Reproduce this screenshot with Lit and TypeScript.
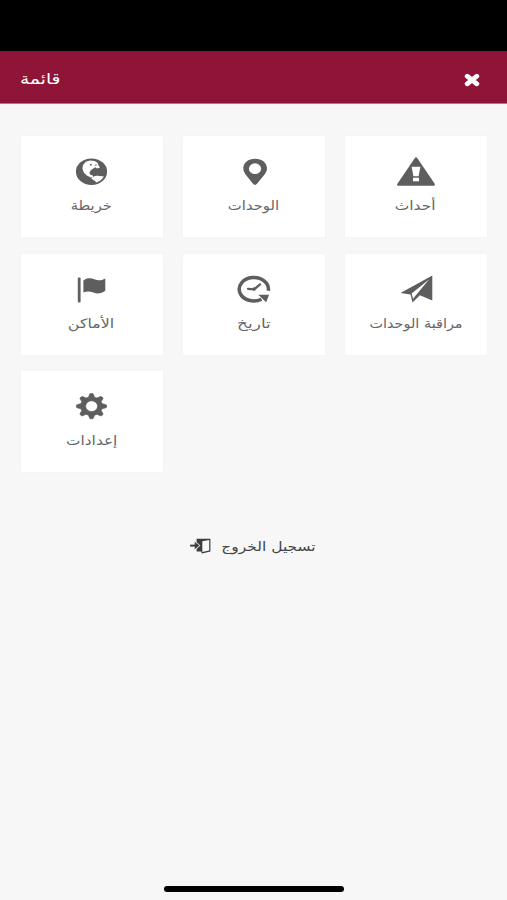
import { LitElement, html, svg, css } from "lit";
import { customElement } from "lit/decorators.js";

const gearPath = (() => {
  const pts: string[] = [];
  const n = 8;
  for (let i = 0; i < n; i++) {
    const a = (i * 2 * Math.PI) / n;
    for (const [d, r] of [[-0.27, 0.72], [-0.15, 0.9], [-0.09, 0.98], [0.09, 0.98], [0.15, 0.9], [0.27, 0.72]]) {
      const x = 23.5 + 15.4 * r * Math.cos(a + d);
      const y = 15.2 + 12.9 * r * Math.sin(a + d);
      pts.push(`${x.toFixed(2)} ${y.toFixed(2)}`);
    }
  }
  return `M${pts.join("L")}ZM17.6 15.2a6 5.4 0 1 0 12 0a6 5.4 0 1 0 -12 0Z`;
})();

const icons = {
  globe: svg`<ellipse cx="23.5" cy="15.7" rx="15.6" ry="13.2"/>
    <path fill="#fff" d="M15 9L17.8 5.8L22 4.6L26.6 4.9L29.4 6.8L30.6 9.4L32 11.4L29.2 12.4L27.4 11.2L25.2 12.6L22.6 14.4L21.4 16.8L22.4 18.8L24.8 19.6L25.4 21.4L22.8 21.6L18.8 19.6L15.8 16.4L14.4 12.6Z"/>
    <path fill="#fff" d="M24.6 21.4Q26.4 19.3 29.6 19.8L36 20.6Q33.6 24.8 28.8 26.6L26.2 24.4L23.2 22.6Z"/>
    <path d="M21.8 8.2l1.6-.8l.4 1.8l-1.4.6zM26 9.2l2.4-1l.2 1.6z"/>`,
  pin: svg`<path fill-rule="evenodd" d="M25 29Q23.9 29 22.8 27.6L15.2 18Q13.3 15.5 13.3 12.4C13.3 6.8 18.2 2.7 25.1 2.7S37 6.8 37 12.4Q37 15.5 35 18L27.2 27.6Q26.1 29 25 29ZM18.9 12.7a6.1 5.4 0 1 0 12.2 0a6.1 5.4 0 1 0 -12.2 0Z"/>`,
  warning: svg`<path d="M22.9 2Q24 .4 25.2 2L42.7 27.8Q43.6 29.7 41.8 29.7H6.4Q4.4 29.7 5.4 27.8Z"/>
    <path fill="#fff" d="M19.6 10.8H28.4L26.6 20.2H21.4ZM21 21.8H27V25.2H21Z"/>`,
  flag: svg`<rect x="9.8" y="3.6" width="2.8" height="24.8" rx="1"/>
    <path d="M15.4 6.4C19 3.6 23 3.8 27 5.6C31 7.2 34 6 37.3 4.4V16.8C33.5 19.4 29.5 20.4 25.5 18.6C21.5 16.9 18.5 17.2 15.4 18.6Z"/>`,
  history: svg`<path fill="none" stroke="currentColor" stroke-width="3.5" d="M31.5 25.2A14.6 11.7 0 1 1 38.3 16.8"/>
    <path d="M28.3 20.8L39 20.8L36.2 28.2Z"/>
    <path fill="none" stroke="currentColor" stroke-width="2.3" stroke-linecap="round" d="M18 14.8L24.3 15.3L30 10.4"/><circle cx="24" cy="15" r="1.7"/>`,
  plane: svg`<path fill-rule="evenodd" d="M40.3 1.5V26.4L27.9 21.2L20.5 28.6L18.5 20.4L8.5 18.9ZM37.2 5.2L19.7 19.4L21 24.8Z"/>`,
  gear: svg`<path fill-rule="evenodd" d=${gearPath} stroke="currentColor" stroke-width=".7" stroke-linejoin="round"/>`,
};

type Item = { icon: keyof typeof icons; label: string; scale: number };

const items: Item[] = [
  { icon: "globe", label: "خريطة", scale: 1.13 },
  { icon: "pin", label: "الوحدات", scale: 1.14 },
  { icon: "warning", label: "أحداث", scale: 1.19 },
  { icon: "flag", label: "الأماكن", scale: 1.22 },
  { icon: "history", label: "تاريخ", scale: 1.3 },
  { icon: "plane", label: "مراقبة الوحدات", scale: 1.11 },
  { icon: "gear", label: "إعدادات", scale: 1.18 },
];

@customElement("menu-card")
class MenuCard extends LitElement {
  static properties = { item: { attribute: false } };
  declare item: Item;
  static styles = css`
    :host { display: flex; flex-direction: column; align-items: center; box-sizing: border-box; padding-top: 20px;
      background: #fff; box-shadow: 0 0 5px rgba(0, 0, 0, .025); color: #5e5e5e; }
    .icon { display: block; width: 48px; height: 32px; fill: currentColor; }
    .label { margin: 8px 1px 0 0; font-size: 13px; line-height: 20px; white-space: nowrap; color: #666; }
  `;
  render() {
    return html`<svg class="icon" viewBox="0 0 48 32">${icons[this.item.icon]}</svg>
      <span class="label" dir="rtl" style="transform:scaleX(${this.item.scale})">${this.item.label}</span>`;
  }
}

@customElement("app-root")
class AppRoot extends LitElement {
  static styles = css`
    :host { display: flex; flex-direction: column; height: 900px; overflow: hidden; background: #f7f7f7;
      font-family: "DejaVu Sans", sans-serif; }
    .status { height: 51px; flex: none; background: #000; }
    .bar { height: 53px; flex: none; box-sizing: border-box; padding: 0 27px 0 20px; display: flex; align-items: center;
      justify-content: space-between; background: #8e1537; color: #fff; border-bottom: 1px solid #b9718a; }
    .title { font-size: 15px; line-height: 22px; margin-top: 3px; transform: scaleX(1.24); transform-origin: left; }
    .close { display: block; width: 16px; height: 14px; margin-top: 5px; }
    .grid { display: grid; grid-template-columns: repeat(3, 142px); grid-auto-rows: 101px;
      gap: 16.5px 20px; padding: 32px 20px 0 21px; }
    .logout { display: flex; align-items: center; justify-content: center; gap: 10px; margin-top: 63px; height: 22px;
      padding-right: 2px; color: #444; font-size: 13px; }
    .door { display: block; width: 21px; height: 16px; }
    .exit { width: 95px; text-align: center; white-space: nowrap; transform: scaleX(1.19); }
    .home { width: 180px; height: 6px; border-radius: 3px; background: #000; margin: auto auto 8px 164px; }
  `;
  render() {
    return html`
      <div class="status"></div>
      <header class="bar">
        <span class="title" dir="rtl">قائمة</span>
        <svg class="close" viewBox="0 0 16 14"><path d="M3.2 3.2L12.8 10.8M12.8 3.2L3.2 10.8" stroke="#fff" stroke-width="4.8" stroke-linecap="round"/></svg>
      </header>
      <main class="grid">${items.map((i) => html`<menu-card .item=${i}></menu-card>`)}</main>
      <div class="logout">
        <svg class="door" viewBox="0 0 21 16">
          <path d="M6.6 .8H20.4V13.6L12 15.4L11 13.4H6.6V11L10.4 7.6L6.6 4.2Z" fill="#3c3c3c"/>
          <path d="M12.3 3.2L19.2 1.9V12.6L12.3 14Z" fill="#f7f7f7"/>
          <path d="M0 6.4H4.6V3.6L9.6 7.6L4.6 11.6V8.8H0Z" fill="#3c3c3c" stroke="#f7f7f7" stroke-width=".3"/>
        </svg>
        <span class="exit" dir="rtl">تسجيل الخروج</span>
      </div>
      <div class="home"></div>`;
  }
}
